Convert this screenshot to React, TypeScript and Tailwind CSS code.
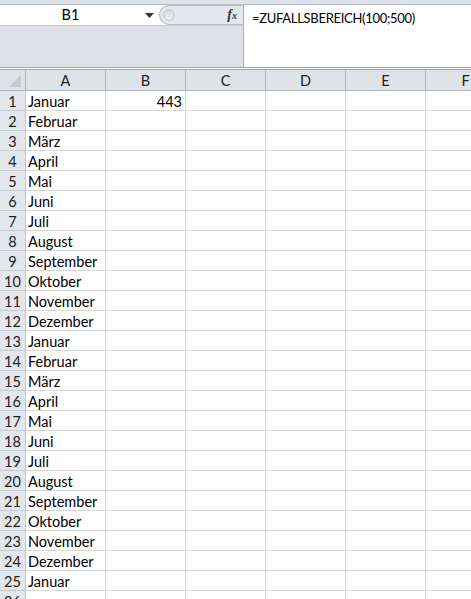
import React from "react"

const months = [
    "Januar", "Februar", "März", "April", "Mai", "Juni", "Juli", "August",
    "September", "Oktober", "November", "Dezember",
    "Januar", "Februar", "März", "April", "Mai", "Juni", "Juli", "August",
    "September", "Oktober", "November", "Dezember", "Januar", "",
]

const cols = ["A", "B", "C", "D", "E", "F"]

const font = "font-['Lato','Open_Sans',sans-serif]"

export default function App() {
    return (
        <div className={`w-[471px] h-[599px] overflow-hidden bg-white ${font} text-[14.5px] text-black`}>
            {/* top strip */}
            <div className="h-[5px] bg-[#dfe3e8] border-b border-[#b9c0c9]"></div>

            {/* name box + formula bar */}
            <div className="flex h-[62px]">
                <div className="w-[243px] flex flex-col bg-[#dee2e7]">
                    <div className="flex h-[21px] bg-white border-b border-[#c6cbd2]">
                        <div className="w-[159px] flex items-center relative">
                            <span className="w-[141px] text-center">B1</span>
                            <svg width="9" height="5" viewBox="0 0 9 5" className="ml-auto mr-[5px]">
                                <path d="M0 0 L9 0 L4.5 5 Z" fill="#333" />
                            </svg>
                        </div>
                        <div className="flex-1 flex items-center bg-[#e4e7eb] rounded-l-[11px] border-l border-y border-[#b7bdc5] pl-[3px]">
                            <div className="w-[12px] h-[12px] rounded-full bg-gradient-to-b from-[#d2d6dc] to-[#eef0f2] border border-[#c2c7ce]"></div>
                            <span className="ml-auto mr-[6px] font-['Liberation_Serif',serif] italic font-bold text-[14px] text-[#333] leading-none">
                                f<span className="text-[10px]">x</span>
                            </span>
                        </div>
                    </div>
                    <div className="flex-1"></div>
                </div>
                <div className="flex-1 bg-white border-l border-[#a9b0b9] pl-[8px] pt-[4px] text-[13px] tracking-[-0.3px] leading-[18px]">
                    =ZUFALLSBEREICH(100;500)
                </div>
            </div>

            {/* separator */}
            <div className="h-[3px] bg-white border-y border-[#9ea6b0]"></div>

            {/* grid */}
            <div className="grid grid-cols-[26px_80px_80px_80px_80px_80px_80px]">
                <div className="h-[21px] bg-[#dfe3e8] border-r border-b border-[#aeb4bc] relative">
                    <svg width="12" height="12" viewBox="0 0 12 12" className="absolute right-[4px] bottom-[3px]">
                        <path d="M12 0 L12 12 L0 12 Z" fill="#c5cad1" />
                    </svg>
                </div>
                {cols.map((c) => (
                    <div key={c} className="h-[21px] bg-[#dfe3e8] border-r border-b border-[#aeb4bc] flex items-center justify-center pt-[1px] text-[#222]">
                        {c}
                    </div>
                ))}

                {months.map((m, i) => (
                    <React.Fragment key={i}>
                        <div className="h-[20px] bg-[#e3e6ea] border-r border-b border-[#c5cad1] flex items-center justify-center pt-[2px] text-[#222]">
                            {i + 1}
                        </div>
                        <div className="h-[20px] border-r border-b border-[#d8d8d8] flex items-center pl-[2px] pt-[2px] whitespace-nowrap">
                            {m}
                        </div>
                        <div className="h-[20px] border-r border-b border-[#d8d8d8] flex items-center justify-end pr-[3px] pt-[2px]">
                            {i === 0 ? "443" : ""}
                        </div>
                        <div className="h-[20px] border-r border-b border-[#d8d8d8]"></div>
                        <div className="h-[20px] border-r border-b border-[#d8d8d8]"></div>
                        <div className="h-[20px] border-r border-b border-[#d8d8d8]"></div>
                        <div className="h-[20px] border-r border-b border-[#d8d8d8]"></div>
                    </React.Fragment>
                ))}
            </div>
        </div>
    )
}
